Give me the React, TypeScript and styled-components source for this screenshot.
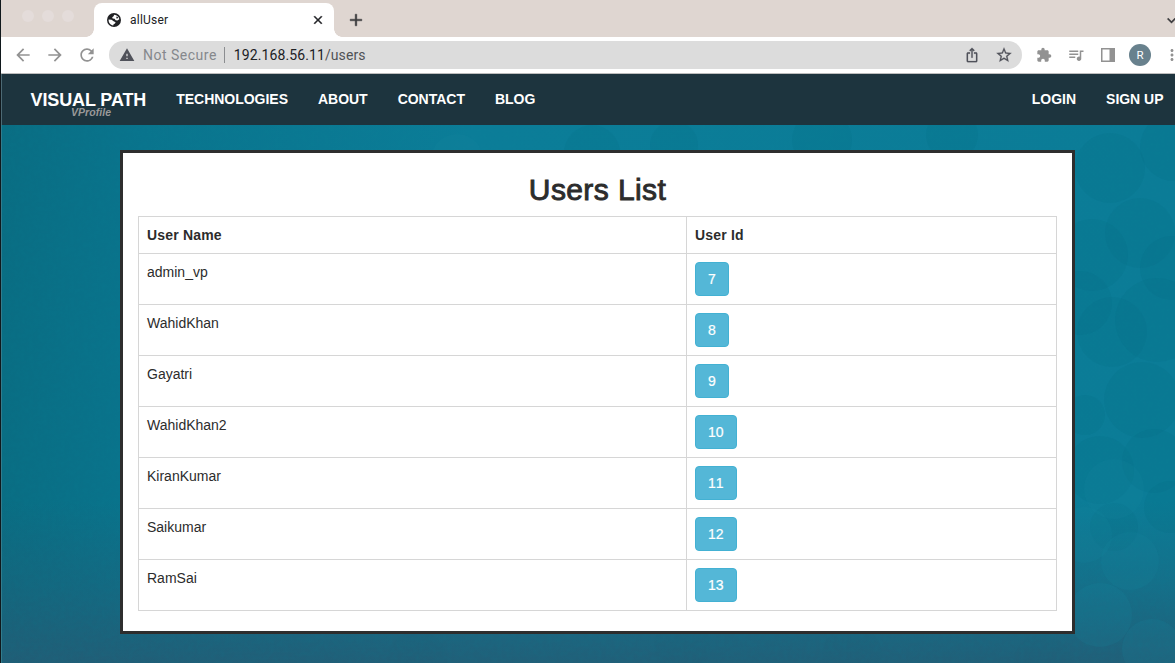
import React from 'react';
import styled, { createGlobalStyle } from 'styled-components';
import {
  MdArrowBack, MdArrowForward, MdRefresh, MdClose, MdAdd, MdWarning,
  MdIosShare, MdStarBorder, MdExtension, MdQueueMusic, MdMoreVert, MdExpandMore,
} from 'react-icons/md';

const Global = createGlobalStyle`
  *, *::before, *::after { box-sizing: border-box; }
  body { margin: 0; overflow: hidden; font-family: "Liberation Sans", Arial, sans-serif; }
  svg path[fill="none"] { stroke: none; }
`;

const Window = styled.div`
  display: flex;
  flex-direction: column;
  width: 1175px;
  height: 663px;
  overflow: hidden;
  border-left: 1px solid #10181c;
  background: #fff;
`;

const TabStrip = styled.div`
  display: flex;
  align-items: flex-end;
  flex: none;
  height: 37px;
  padding-left: 21px;
  background: #dfd6d1;
`;

const Lights = styled.div`
  display: flex;
  gap: 8px;
  width: 72px;
  height: 37px;
  padding-top: 10px;
`;

const Light = styled.span`
  width: 12px;
  height: 12px;
  border-radius: 50%;
  background: #e4dcda;
`;

const Tab = styled.div`
  position: relative;
  display: flex;
  align-items: center;
  width: 240px;
  height: 34px;
  padding: 0 9px 0 13px;
  border-radius: 8px 8px 0 0;
  background: #fff;
  color: #202124;
  &::before, &::after {
    content: "";
    position: absolute;
    bottom: 0;
    width: 8px;
    height: 8px;
  }
  &::before { left: -8px; background: radial-gradient(circle at 0 0, transparent 7.5px, #fff 8px); }
  &::after { right: -8px; background: radial-gradient(circle at 100% 0, transparent 7.5px, #fff 8px); }
`;

const TabTitle = styled.span`
  flex: 1;
  margin-left: 9px;
  font: 12px Roboto, sans-serif;
  letter-spacing: 0.22px;
`;

const CloseIcon = styled(MdClose)`
  stroke: currentColor;
  stroke-width: 0.8;
`;

const NewTab = styled.div`
  display: flex;
  align-items: center;
  height: 34px;
  margin-left: 12px;
  color: #3c3c3e;
  svg { stroke: currentColor; stroke-width: 0.5; }
`;

const TabSearch = styled(NewTab)`
  flex: none;
  margin-left: auto;
  margin-right: -5px;
`;

const Toolbar = styled.div`
  display: flex;
  align-items: center;
  flex: none;
  height: 37px;
  padding-left: 12px;
  border-bottom: 1px solid #bdbdbd;
  color: #929292;
  svg { flex: none; }
`;

const NavButtons = styled.div`
  display: flex;
  flex: none;
  gap: 12px;
  width: 96px;
`;

const AddressBar = styled.div`
  display: flex;
  align-items: center;
  flex: none;
  width: 913px;
  height: 28px;
  padding: 0 9px 0 10px;
  border-radius: 14px;
  background: #dcdcdc;
  color: #50525a;
  font: 14px Roboto, sans-serif;
`;

const Insecure = styled.span`
  margin-left: 8px;
  color: #85888c;
  letter-spacing: 0.5px;
`;

const Divider = styled.span`
  width: 1px;
  height: 16px;
  margin: 0 9px 0 7px;
  background: #8b8d90;
`;

const Url = styled.span`
  flex: 1;
  color: #505256;
  letter-spacing: 0.1px;
  b { font-weight: 400; color: #202124; }
`;

const BarActions = styled.div`
  display: flex;
  align-items: center;
  gap: 15px;
  svg { stroke: currentColor; stroke-width: 0.3; }
`;

const ToolbarActions = styled.div`
  display: flex;
  align-items: center;
  flex: none;
  margin-left: 14px;
`;

const QueueIcon = styled(MdQueueMusic)`
  margin-left: 15px;
`;

const PanelIcon = styled.svg`
  margin-left: 16px;
`;

const Avatar = styled.span`
  display: flex;
  align-items: center;
  justify-content: center;
  flex: none;
  width: 22px;
  height: 22px;
  margin: 0 12px 0 14px;
  border-radius: 50%;
  background: #68818d;
  color: #fff;
  font: 11.5px Roboto, sans-serif;
`;

const SiteHeader = styled.header`
  display: flex;
  flex: none;
  height: 51px;
  padding: 0 11.5px 0 28.5px;
  border-left: 1px solid #4d6a75;
  background: #1d343e;
  color: #fff;
  font-weight: 700;
`;

const Brand = styled.div`
  display: flex;
  flex-direction: column;
  width: 116px;
  padding-top: 16px;
  font-size: 18px;
  line-height: 20px;
  letter-spacing: -0.12px;
  white-space: nowrap;
`;

const SubBrand = styled.span`
  padding-left: 40.5px;
  margin-top: -3px;
  color: #999;
  font-size: 10.5px;
  font-style: italic;
  line-height: 11px;
  letter-spacing: 0.05px;
`;

const NavLinks = styled.nav`
  display: flex;
  gap: 30px;
  margin-left: 29.7px;
  padding-top: 15px;
  font-size: 14px;
  line-height: 20px;
  white-space: nowrap;
  letter-spacing: -0.02px;
`;

const AccountLinks = styled(NavLinks)`
  margin-left: auto;
`;

const Page = styled.main`
  position: relative;
  flex: 1;
  padding: 25px 0 0 118px;
  border-left: 1px solid #327c8d;
  background: #096f88;
`;

const Backdrop = styled.svg`
  position: absolute;
  inset: 0;
`;

const Card = styled.section`
  position: relative;
  width: 955px;
  height: 484px;
  padding: 0 15px;
  border: 3px solid #2e2e2e;
  background: #fff;
  color: #2c2c2c;
`;

const Title = styled.h2`
  margin: 20px 0 10px;
  font-size: 30px;
  font-weight: 400;
  line-height: 33px;
  letter-spacing: 0.4px;
  text-align: center;
  -webkit-text-stroke: 0.9px #2c2c2c;
`;

const Table = styled.table`
  width: 919px;
  border-collapse: collapse;
  table-layout: fixed;
  font-size: 14px;
  line-height: 20px;
`;

const cell = `
  padding: 8px;
  border: 1px solid #d6d6d6;
  text-align: left;
  vertical-align: top;
`;
const HeadCell = styled.th<{ $width: number }>`
  ${cell}
  width: ${p => p.$width}px;
  height: 37px;
  letter-spacing: 0.18px;
`;
const Cell = styled.td`
  ${cell}
  height: 51px;
`;

const IdButton = styled.button`
  display: block;
  height: 34px;
  padding: 6px 12px;
  border: 1px solid #43b1d3;
  border-radius: 4px;
  background: #54b7d7;
  color: #fff;
  font: 14px/20px "Liberation Sans", Arial, sans-serif;
  font-kerning: none;
  -webkit-text-stroke: 0.2px #fff;
`;

const users = [
  { name: 'admin_vp', id: 7 },
  { name: 'WahidKhan', id: 8 },
  { name: 'Gayatri', id: 9 },
  { name: 'WahidKhan2', id: 10 },
  { name: 'KiranKumar', id: 11 },
  { name: 'Saikumar', id: 12 },
  { name: 'RamSai', id: 13 },
];

/* Overlapping translucent discs: cx, cy, r */
const discs = [
  [1108, 43, 35], [1172, 22, 34], [1138, 108, 35], [1090, 130, 36], [1170, 143, 32],
  [1110, 207, 35], [1155, 195, 42], [1078, 178, 32], [1140, 275, 38], [1083, 290, 20],
  [1152, 336, 32], [1098, 345, 34], [1168, 382, 26], [1112, 402, 24],
  [590, 28, 28], [672, 20, 24], [820, 15, 30], [950, 10, 26],
  [415, 536, 30], [680, 520, 28], [850, 530, 30], [1040, 540, 30],
];

/* Paler discs along the lower right: cx, cy, r */
const paleDiscs = [
  [1128, 436, 29], [1082, 410, 28], [1098, 490, 32], [1150, 524, 30], [1112, 364, 30], [455, 35, 26],
];

function PageBackdrop() {
  return (
    <Backdrop width="1173" height="538" viewBox="0 0 1173 538">
      <defs>
        <linearGradient id="sea" x1="0" x2="1" y1="0" y2="0">
          <stop offset="0" stopColor="#0a6d83" />
          <stop offset="0.12" stopColor="#0a748d" />
          <stop offset="0.4" stopColor="#0c7d98" />
          <stop offset="1" stopColor="#0c7c97" />
        </linearGradient>
        <linearGradient id="dusk" x1="0" x2="0" y1="0" y2="1">
          <stop offset="0.7" stopColor="#245b74" stopOpacity="0" />
          <stop offset="0.86" stopColor="#245b74" stopOpacity="0.4" />
          <stop offset="1" stopColor="#245b74" stopOpacity="0.88" />
        </linearGradient>
        <filter id="grain" x="0" y="0" width="100%" height="100%">
          <feTurbulence type="fractalNoise" baseFrequency="0.22" numOctaves="3" seed="4" />
          <feColorMatrix values="0 0 0 0 0  0 0 0 0 0.25  0 0 0 0 0.32  0.5 0 0 0 -0.15" />
        </filter>
      </defs>
      <rect width="1173" height="538" fill="url(#sea)" />
      {discs.map(([cx, cy, r], i) => (
        <circle key={i} cx={cx} cy={cy} r={r} fill="#066a85" fillOpacity="0.17" />
      ))}
      <rect width="1173" height="538" fill="url(#dusk)" />
      {paleDiscs.map(([cx, cy, r], i) => (
        <circle key={i} cx={cx} cy={cy} r={r} fill="#1a87a2" fillOpacity="0.16" />
      ))}
      <rect width="1173" height="538" filter="url(#grain)" opacity="0.3" />
    </Backdrop>
  );
}

function Globe() {
  return (
    <svg width="14" height="14" viewBox="0 0 14 14">
      <circle cx="7" cy="7" r="7" fill="#202124" />
      <path d="M7.2 1.7L6.6 3.2 5.2 4.2 5.6 5.4 7.6 5.7 8.6 7.2 10.4 7.4 12.3 6.2C12 3.8 10 1.8 7.2 1.7z" fill="#fff" />
      <path d="M1.6 6.4L4.6 6.8 6.6 8.2 8.6 9.2 8 10.6 6.6 11.2 6.2 12.4C3.5 12 1.4 9.6 1.6 6.4z" fill="#fff" />
      <path d="M9.4 3.4l1.4.5.3 1.3-1.7.3z" fill="#202124" />
    </svg>
  );
}

export default function App() {
  return (
    <>
      <Global />
      <Window>
        <TabStrip>
          <Lights><Light /><Light /><Light /></Lights>
          <Tab>
            <Globe />
            <TabTitle>allUser</TabTitle>
            <CloseIcon size={14} />
          </Tab>
          <NewTab><MdAdd size={20} /></NewTab>
          <TabSearch><MdExpandMore size={17} /></TabSearch>
        </TabStrip>
        <Toolbar>
          <NavButtons>
            <MdArrowBack size={20} />
            <MdArrowForward size={20} />
            <MdRefresh size={20} />
          </NavButtons>
          <AddressBar>
            <MdWarning size={16} />
            <Insecure>Not Secure</Insecure>
            <Divider />
            <Url><b>192.168.56.11</b>/users</Url>
            <BarActions>
              <MdIosShare size={16} />
              <MdStarBorder size={18} />
            </BarActions>
          </AddressBar>
          <ToolbarActions>
            <MdExtension size={16} />
            <QueueIcon size={18} />
            <PanelIcon width="14" height="14" viewBox="0 0 14 14">
              <path d="M0 0h14v14H0zM1.5 1.5v11h7v-11z" fill="currentColor" fillRule="evenodd" />
            </PanelIcon>
            <Avatar>R</Avatar>
            <MdMoreVert size={18} />
          </ToolbarActions>
        </Toolbar>
        <SiteHeader>
          <Brand>
            VISUAL PATH
            <SubBrand>VProfile</SubBrand>
          </Brand>
          <NavLinks>
            <span>TECHNOLOGIES</span>
            <span>ABOUT</span>
            <span>CONTACT</span>
            <span>BLOG</span>
          </NavLinks>
          <AccountLinks>
            <span>LOGIN</span>
            <span>SIGN UP</span>
          </AccountLinks>
        </SiteHeader>
        <Page>
          <PageBackdrop />
          <Card>
            <Title>Users List</Title>
            <Table>
              <thead>
                <tr>
                  <HeadCell $width={548}>User Name</HeadCell>
                  <HeadCell $width={370}>User Id</HeadCell>
                </tr>
              </thead>
              <tbody>
                {users.map(u => (
                  <tr key={u.id}>
                    <Cell>{u.name}</Cell>
                    <Cell><IdButton>{u.id}</IdButton></Cell>
                  </tr>
                ))}
              </tbody>
            </Table>
          </Card>
        </Page>
      </Window>
    </>
  );
}
